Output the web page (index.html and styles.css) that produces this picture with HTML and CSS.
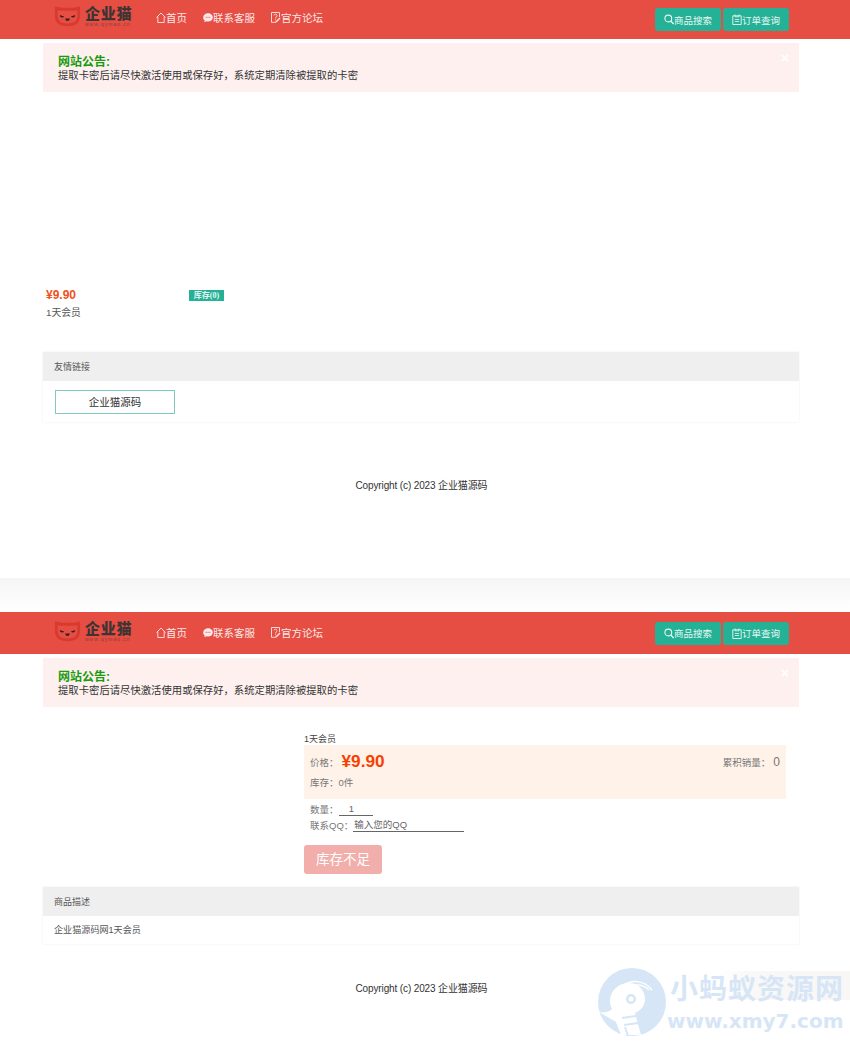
FILE: index.html
```html
<!DOCTYPE html>
<html lang="zh-CN">
<head>
<meta charset="utf-8">
<title>企业猫源码</title>
<link rel="stylesheet" href="styles.css">
</head>
<body>
<svg class="defs" width="0" height="0" aria-hidden="true">
  <symbol id="cat" viewBox="0 0 28 22">
    <path d="M1 1 Q5 2.500 8 2.500 H20 Q23 2.500 27 1 V11 Q27 21.500 14 21.500 Q1 21.500 1 11 Z" fill="#d93a2e"/>
    <path d="M3.800 5 Q7 5.600 9 5.600 H19 Q21 5.600 24.200 5 V11 Q24.200 18.800 14 18.800 Q3.800 18.800 3.800 11 Z" fill="#e64d43"/>
    <path d="M6.500 10.500 q1.500 2 3.500 1 M18 11.500 q2 1 3.500 -1" fill="none" stroke="#33201f" stroke-width="1.400"/>
    <path d="M11.500 13.500 h5 l-1 2.400 h-3 z" fill="#33201f"/>
  </symbol>
  <symbol id="i-home" viewBox="0 0 10 11"><path d="M.5 5.500 5 1l4.500 4.500M1.800 4.500v6h6.400v-6" fill="none" stroke="currentColor" stroke-width=".9"/></symbol>
  <symbol id="i-chat" viewBox="0 0 10 11"><path d="M5 1.200C2.300 1.200.2 3 .2 5.400c0 1.200.6 2.300 1.500 3L1.400 10.300l2.200-1c.4.100.9.200 1.400.2 2.700 0 4.800-1.800 4.800-4.100S7.700 1.200 5 1.200z" fill="currentColor"/><path d="M2.700 5.300h1M4.500 5.300h1M6.300 5.300h1" stroke="#e64d43"/></symbol>
  <symbol id="i-forum" viewBox="0 0 10 11"><path d="M5 10.300H.5V.5h8v4.500" fill="none" stroke="currentColor" stroke-width=".9"/><path d="M5.500 10.500l4-4-1-1-4 4z" fill="currentColor"/><path d="M3 3.500a1.500 1.500 0 1 1 2 1.500L4.600 6.500M4.500 7.300v1" fill="none" stroke="currentColor" stroke-width=".8"/></symbol>
  <symbol id="i-search" viewBox="0 0 10 11"><circle cx="4.300" cy="4.500" r="3.400" fill="none" stroke="currentColor" stroke-width="1.100"/><path d="M6.800 7l2.800 3" stroke="currentColor" stroke-width="1.300"/></symbol>
  <symbol id="i-order" viewBox="0 0 10 11"><path d="M.8 1.800h8.400v8.700H.8z" fill="none" stroke="currentColor" stroke-width=".9"/><path d="M3 .5v2.300h4V.5M2.800 5.500h4.400M2.800 7.500h4.400" fill="none" stroke="currentColor" stroke-width=".8"/></symbol>
</svg>

<section class="screen screen-list">
  <header class="navbar nav-short">
    <div class="brand">
      <svg class="cat"><use href="#cat"/></svg>
      <div class="brand-text"><span class="brand-name">企业猫</span><span class="brand-url">www.qymao.cn</span></div>
    </div>
    <nav class="links">
      <a><svg class="ic"><use href="#i-home"/></svg>首页</a>
      <a><svg class="ic"><use href="#i-chat"/></svg>联系客服</a>
      <a><svg class="ic"><use href="#i-forum"/></svg>官方论坛</a>
    </nav>
    <div class="actions">
      <a class="btn"><svg class="ic"><use href="#i-search"/></svg>商品搜索</a>
      <a class="btn"><svg class="ic"><use href="#i-order"/></svg>订单查询</a>
    </div>
  </header>
  <div class="notice">
    <span class="close">×</span>
    <h4>网站公告:</h4>
    <p>提取卡密后请尽快激活使用或保存好，系统定期清除被提取的卡密</p>
  </div>
  <div class="goods">
    <div class="goods-head"><span class="goods-price">¥9.90</span><span class="stock-tag">库存(0)</span></div>
    <div class="goods-name">1天会员</div>
  </div>
  <div class="panel links-panel">
    <div class="panel-head">友情链接</div>
    <div class="panel-body friend-body"><a class="friend">企业猫源码</a></div>
  </div>
  <footer class="copy copy-list">Copyright (c) 2023 企业猫源码</footer>
</section>

<div class="divider"></div>

<section class="screen screen-detail">
  <header class="navbar">
    <div class="brand">
      <svg class="cat"><use href="#cat"/></svg>
      <div class="brand-text"><span class="brand-name">企业猫</span><span class="brand-url">www.qymao.cn</span></div>
    </div>
    <nav class="links">
      <a><svg class="ic"><use href="#i-home"/></svg>首页</a>
      <a><svg class="ic"><use href="#i-chat"/></svg>联系客服</a>
      <a><svg class="ic"><use href="#i-forum"/></svg>官方论坛</a>
    </nav>
    <div class="actions">
      <a class="btn"><svg class="ic"><use href="#i-search"/></svg>商品搜索</a>
      <a class="btn"><svg class="ic"><use href="#i-order"/></svg>订单查询</a>
    </div>
  </header>
  <div class="notice">
    <span class="close">×</span>
    <h4>网站公告:</h4>
    <p>提取卡密后请尽快激活使用或保存好，系统定期清除被提取的卡密</p>
  </div>
  <div class="detail">
    <div class="detail-title">1天会员</div>
    <div class="price-box">
      <div class="price-row">
        <span class="label">价格：</span><span class="price">¥9.90</span>
        <span class="sold"><span class="label">累积销量：</span><span class="sold-num">0</span></span>
      </div>
      <div class="stock-row">库存：0件</div>
    </div>
    <div class="field"><span class="label">数量：</span><span class="line qty">1</span></div>
    <div class="field field-qq"><span class="label">联系QQ：</span><span class="line qq">输入您的QQ</span></div>
    <a class="buy">库存不足</a>
  </div>
  <div class="panel desc-panel">
    <div class="panel-head">商品描述</div>
    <div class="panel-body desc-body">企业猫源码网1天会员</div>
  </div>
  <footer class="copy copy-detail">Copyright (c) 2023 企业猫源码</footer>
</section>

<div class="ghost-band"></div>
<div class="watermark">
  <svg class="wm-logo" viewBox="0 0 70 70">
    <circle cx="35" cy="35" r="34" fill="#d6e6f6"/>
    <path d="M13 34c0-11 9-18 19-18 10 0 16 8 16 16 0 7-5 12-10 14l6 22H24l-5-13-17-10c5 1 10 0 13-3-1-2-2-5-2-8z" fill="#fff"/>
    <circle cx="34" cy="32" r="5" fill="#d6e6f6"/>
    <circle cx="34" cy="32" r="2.500" fill="#fff"/>
    <path d="M25 19c9-7 22-6 30 4M33 19c7-2 14-1 19 4" fill="none" stroke="#fff" stroke-width="1.500"/>
    <path d="M25 51l14-2M27 58l14-2M31 69l-3-9" fill="none" stroke="#d6e6f6" stroke-width="2"/>
  </svg>
  <div class="wm-text">
    <span class="wm-cn">小蚂蚁资源网</span>
    <span class="wm-en">www.xmy7.com</span>
  </div>
</div>
</body>
</html>
```
FILE: styles.css
```css
* { box-sizing: border-box; }
html, body { margin: 0; padding: 0; }
body {
  position: relative;
  width: 850px;
  height: 1053px;
  overflow: hidden;
  background: #fff;
  color: #333;
  font-family: "Liberation Sans", "Noto Sans CJK SC", sans-serif;
  font-size: 10px;
}
.defs { position: absolute; }
a { color: inherit; text-decoration: none; }

.screen-list { height: 578px; }
.screen-detail { height: 441px; }

.navbar {
  display: flex;
  align-items: center;
  height: 42px;
  padding: 0 61px 0 54px;
  background: #e64d43;
}
.nav-short { height: 39px; }
.brand { display: flex; align-items: center; gap: 4px; width: 102px; margin-top: -4px; }
.nav-short .brand { margin-top: -7px; }
.cat { width: 27px; height: 22px; }
.brand-text { display: flex; flex-direction: column; }
.brand-name {
  color: #3d3433;
  font-size: 15px;
  line-height: 15px;
  font-weight: 900;
  letter-spacing: .8px;
}
.brand-url { color: #8a3f38; font-size: 5px; line-height: 6px; letter-spacing: 1px; white-space: nowrap; }
.links { display: flex; gap: 16px; margin-bottom: 1px; color: #fbe9e7; font-size: 10.500px; }
.nav-short .links { margin-bottom: 5px; }
.links a, .btn { display: flex; align-items: center; }
.ic { width: 10px; height: 11px; flex: none; }
.actions { display: flex; gap: 2px; margin-left: auto; }
.btn {
  justify-content: center;
  width: 66px;
  height: 23px;
  border-radius: 3px;
  background: #25b196;
  color: #e9f7f4;
  font-size: 9.500px;
}

.notice {
  position: relative;
  width: 756px;
  height: 49px;
  margin: 4px 0 0 43px;
  padding: 13px 15px 0;
  background: #fdf0ee;
  color: #333;
}
.notice h4 { margin: 0; color: #1a9a0f; font-size: 12px; line-height: 13px; font-weight: 700; }
.notice p { margin: 0; font-size: 10.350px; line-height: 14px; }
.close {
  position: absolute;
  top: 8px;
  right: 10px;
  color: #fff;
  font-size: 14px;
  line-height: 14px;
  font-weight: 700;
}

.goods { width: 181px; margin: 196px 0 0 46px; }
.goods-head { display: flex; align-items: center; justify-content: space-between; height: 14px; }
.goods-price { color: #f1511b; font-size: 12px; font-weight: 700; }
.stock-tag {
  width: 35px;
  margin-right: 3px;
  background: #25b196;
  color: #e9f7f4;
  font-family: "Liberation Serif", "Noto Sans CJK SC", serif;
  font-size: 8px;
  font-weight: 700;
  line-height: 11px;
  text-align: center;
}
.goods-name { margin-top: 4px; color: #555; font-size: 9.800px; line-height: 14px; }

.panel {
  width: 756px;
  margin-left: 43px;
  background: #fff;
  box-shadow: 0 0 2px rgba(0, 0, 0, .08);
}
.links-panel { margin-top: 32px; }
.panel-head {
  height: 29px;
  padding-left: 11px;
  background: #efefef;
  color: #555;
  font-size: 9px;
  line-height: 30px;
}
.friend-body { height: 41px; padding: 9px 12px 0; }
.friend {
  display: block;
  width: 120px;
  height: 24px;
  border: 1px solid #7ecabc;
  color: #333;
  font-size: 10.500px;
  line-height: 22px;
  text-align: center;
}
.copy { padding-right: 7px; color: #333; font-size: 10px; letter-spacing: -.13px; line-height: 14px; text-align: center; }
.copy-list { margin-top: 57px; }
.copy-detail { margin-top: 38px; }

.divider { height: 34px; background: linear-gradient(#f5f5f5, #fff); }

.detail { width: 482px; margin: 26px 0 0 304px; color: #777; }
.detail-title { color: #444; font-size: 9px; line-height: 12px; }
.price-box { height: 54px; background: #fef2e9; padding: 5px 6px 0; }
.price-row { display: flex; align-items: center; height: 23px; }
.label { font-size: 9.500px; color: #777; }
.price { margin-left: 3px; color: #f83f00; font-size: 17.200px; font-weight: 700; }
.sold { display: flex; align-items: center; margin-left: auto; }
.sold-num { margin-left: 3px; font-size: 12px; }
.stock-row { margin-top: 3px; font-size: 9.500px; line-height: 14px; }
.field { display: flex; align-items: flex-end; height: 14px; margin: 3px 0 0 6px; }
.field-qq { margin-top: 2px; }
.line { border-bottom: 1px solid #666; color: #666; font-size: 9.500px; line-height: 13px; }
.qty { width: 34px; padding: 1px 8px 0 0; text-align: center; }
.qq { width: 111px; padding: 1px 0 0 1px; }
.buy {
  display: block;
  width: 78px;
  height: 29px;
  margin-top: 13px;
  border-radius: 3px;
  background: #f2aeab;
  color: #fff;
  font-family: "Liberation Serif", "Noto Sans CJK SC", serif;
  font-size: 13.500px;
  line-height: 29px;
  text-align: center;
}
.desc-panel { margin-top: 13px; }
.desc-body { height: 28px; padding-left: 11px; color: #555; font-size: 9.100px; line-height: 29px; }

.ghost-band {
  position: absolute;
  left: 720px;
  top: 971px;
  width: 130px;
  height: 29px;
  background: linear-gradient(90deg, #fff, #f9f8f7 25%, #f9f7f5);
}
.watermark {
  position: absolute;
  left: 597px;
  top: 967px;
  display: flex;
  gap: 3px;
}
.wm-logo { width: 70px; height: 70px; }
.wm-text { display: flex; flex-direction: column; padding-top: 5px; }
.wm-cn { color: #d6e6f6; font-size: 28px; line-height: 36px; font-weight: 700; letter-spacing: 1px; white-space: nowrap; }
.wm-en { color: #d6e6f6; font-size: 20px; line-height: 26px; font-weight: 700; font-family: "DejaVu Sans", sans-serif; white-space: nowrap; margin-left: -3px; }
```
